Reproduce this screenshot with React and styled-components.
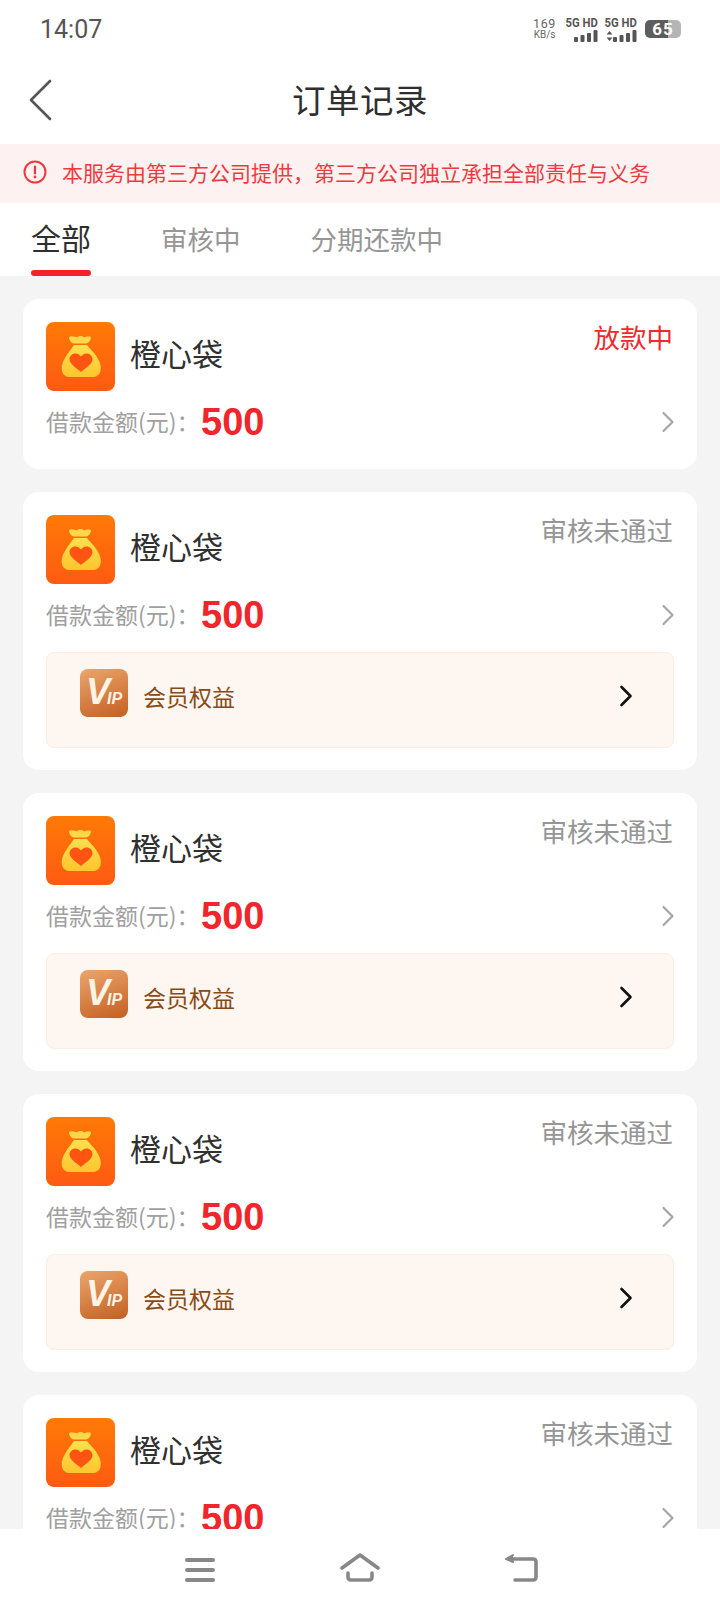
import React from 'react';
import styled, { createGlobalStyle } from 'styled-components';

const GlobalStyle = createGlobalStyle`
    html, body {
        margin: 0;
        padding: 0;
        background: #fff;
    }
    * {
        box-sizing: border-box;
    }
`;

const CJK = `"Noto Sans CJK SC", "Noto Sans", sans-serif`;

const Page = styled.div`
    width: 720px;
    height: 1612px;
    display: flex;
    flex-direction: column;
    overflow: hidden;
    background: #f4f4f4;
    font-family: ${CJK};
`;

const StatusBar = styled.div`
    height: 57px;
    flex: none;
    display: flex;
    align-items: center;
    justify-content: space-between;
    padding: 1px 39px 0 40px;
    background: #fff;
`;

const Clock = styled.span`
    font: 400 25px Roboto, sans-serif;
    color: #555;
`;

const StatusIcons = styled.div`
    display: flex;
    align-items: center;
    gap: 8px;
`;

const Speed = styled.div`
    display: flex;
    flex-direction: column;
    align-items: center;
    margin-right: 3px;
    font: 400 10px/10px Roboto, sans-serif;
    color: #666;

    b {
        font-weight: 400;
        font-size: 12.5px;
        line-height: 12px;
        letter-spacing: 0.6px;
    }
`;

const Signal = styled.div`
    display: flex;
    flex-direction: column;
    align-items: flex-end;
    gap: 1px;
    width: 31px;
    white-space: nowrap;
    font: 700 12.5px/12px Roboto, sans-serif;
    color: #555;

    span {
        display: block;
        transform: scaleX(0.9);
        transform-origin: right center;
    }
`;

const Battery = styled.div`
    width: 36px;
    height: 18px;
    border-radius: 5px;
    background: linear-gradient(90deg, #5d5d5d 0 64%, #b5b5b5 64% 100%);
    color: #fff;
    font: 700 17px/18px Roboto, sans-serif;
    text-align: center;
    letter-spacing: 1px;
`;

const Header = styled.header`
    height: 87px;
    flex: none;
    display: flex;
    align-items: center;
    justify-content: center;
    position: relative;
    padding-bottom: 4px;
    background: #fff;
`;

const BackButton = styled.svg`
    position: absolute;
    left: 28px;
    top: 22px;
`;

const Title = styled.h1`
    margin: 0;
    font-size: 33.5px;
    font-weight: 400;
    color: #2f2f2f;
    letter-spacing: 0.5px;
`;

const Notice = styled.div`
    height: 59px;
    flex: none;
    display: flex;
    align-items: center;
    gap: 15px;
    padding: 0 0 4px 23px;
    background: #fdf1f1;
    color: #ee3a3f;
    font-size: 21px;
    white-space: nowrap;
`;

const Tabs = styled.nav`
    height: 73px;
    flex: none;
    display: flex;
    align-items: flex-start;
    gap: 70px;
    padding: 0 0 0 31px;
    background: #fff;
`;

const Tab = styled.div`
    position: relative;
    height: 73px;
    padding-top: ${p => (p.$active ? '13px' : '15px')};
    font-size: ${p => (p.$active ? '30px' : '26.5px')};
    line-height: 42px;
    color: ${p => (p.$active ? '#2f2f2f' : '#969696')};

    ${p => p.$active && `
        &::after {
            content: "";
            position: absolute;
            left: 0;
            right: 0;
            bottom: 0;
            height: 6px;
            border-radius: 3px;
            background: #f5222d;
        }
    `}
`;

const OrderList = styled.main`
    flex: 1;
    min-height: 0;
    overflow: hidden;
    display: flex;
    flex-direction: column;
    gap: 23px;
    padding: 23px 23px 0;
`;

const Card = styled.section`
    flex: none;
    padding: 23px 23px 22px;
    border-radius: 16px;
    background: #fff;
`;

const CardTop = styled.div`
    display: flex;
    align-items: flex-start;
`;

const AppName = styled.span`
    margin: 11px 0 0 15px;
    flex: 1;
    font-size: 31px;
    line-height: 40px;
    color: #303030;
`;

const Status = styled.span`
    font-size: 26.5px;
    line-height: 34px;
    margin: -2px 1px 0 0;
    color: ${p => (p.$tone === 'active' ? '#ee2a2e' : '#969696')};
`;

const AmountRow = styled.div`
    display: flex;
    align-items: center;
    height: 50px;
    margin-top: 6px;
`;

const AmountLabel = styled.span`
    margin-top: -3px;
    font-size: 23px;
    color: #a0a0a0;
    width: 155px;
    white-space: nowrap;
`;

const AmountValue = styled.span`
    flex: 1;
    font: 700 38px "Liberation Sans", Arial, sans-serif;
    color: #f0262c;
`;

const RowArrow = styled.span`
    display: flex;
    margin-right: -1px;
`;

const VipRow = styled.div`
    height: 96px;
    margin-top: 12px;
    display: flex;
    align-items: center;
    padding: 0 40px 0 33px;
    border: 1px solid #faeee3;
    border-radius: 8px;
    background: #fdf6f1;
`;

const VipBadge = styled.div`
    width: 48px;
    height: 48px;
    margin-top: -15px;
    flex: none;
    display: flex;
    align-items: baseline;
    justify-content: center;
    padding-top: 3px;
    border-radius: 8px;
    background: linear-gradient(160deg, #eba66c, #c45f22);
    color: #fdf3e6;
    font: italic 700 16px/40px "Liberation Sans", Arial, sans-serif;

    b {
        font-size: 36px;
        letter-spacing: -3px;
    }
`;

const VipLabel = styled.span`
    flex: 1;
    margin: -8px 0 0 15px;
    font-size: 23px;
    color: #8a4a14;
`;

const VipArrow = styled.span`
    display: flex;
    margin-top: -9px;
`;

const BottomNav = styled.footer`
    height: 83px;
    flex: none;
    display: flex;
    align-items: flex-end;
    gap: 124px;
    padding: 0 0 29px 184px;
    background: #fff;
`;

function MoneyBag() {
    return (
        <svg width="69" height="69" viewBox="0 0 69 69">
            <defs>
                <linearGradient id="bagBg" x1="0" y1="0" x2="0" y2="1">
                    <stop offset="0" stopColor="#ff7a06" />
                    <stop offset="1" stopColor="#ff5a12" />
                </linearGradient>
                <linearGradient id="bagFill" x1="0" y1="0" x2="0" y2="1">
                    <stop offset="0" stopColor="#ffe04e" />
                    <stop offset="1" stopColor="#fdc52e" />
                </linearGradient>
            </defs>
            <rect width="69" height="69" rx="8" fill="url(#bagBg)" />
            <path d="M23 15c3-1.5 6 0 8 .5 1-2 6-2 7 0 2-.5 4-1.5 7-.5 0 3-2 6-5 6.5H28c-3-.5-5-3.5-5-6.5z" fill="#ffd84a" />
            <path d="M28 23h13c2 3 7 7 10.5 13 3 5 4 9 3 13-1 4-4 6-8 6H24c-4 0-7-2-8-6-1-4 0-8 3-13 3.5-6 7-10 9-13z" fill="url(#bagFill)" />
            <path d="M35 50c-3-3-11.5-7.5-11.5-13 0-3 2.5-5.5 6-5.5 2.5 0 4.5 1.5 5.5 3 1-1.5 3-3 5.5-3 3.5 0 6 2.5 6 5.5 0 5.5-8.5 10-11.5 13z" fill="#ff5412" />
        </svg>
    );
}

function Chevron({ color = '#a6a6a6', width = 2.2 }) {
    return (
        <svg width="14" height="22" viewBox="0 0 14 22" fill="none">
            <path d="M2.5 2l9 9-9 9" stroke={color} strokeWidth={width} strokeLinecap="round" strokeLinejoin="round" />
        </svg>
    );
}

function Bars({ arrows }) {
    return (
        <svg width={arrows ? 31 : 24} height="12" viewBox={arrows ? '0 0 31 12' : '0 0 24 12'} fill="#555">
            {arrows && <path d="M3.5 1l3 3.6h-6zM3.5 11l3-3.6h-6z" />}
            <g transform={arrows ? 'translate(7 0)' : undefined}>
                <rect x="0" y="7" width="4" height="5" rx="1" />
                <rect x="6.5" y="5" width="4" height="7" rx="1" />
                <rect x="13" y="3" width="4" height="9" rx="1" />
                <rect x="19.5" y="0" width="4" height="12" rx="1" />
            </g>
        </svg>
    );
}

function OrderCard({ status, tone, vip }) {
    return (
        <Card>
            <CardTop>
                <MoneyBag />
                <AppName>橙心袋</AppName>
                <Status $tone={tone}>{status}</Status>
            </CardTop>
            <AmountRow>
                <AmountLabel>借款金额(元)：</AmountLabel>
                <AmountValue>500</AmountValue>
                <RowArrow><Chevron /></RowArrow>
            </AmountRow>
            {vip && (
                <VipRow>
                    <VipBadge><b>V</b>IP</VipBadge>
                    <VipLabel>会员权益</VipLabel>
                    <VipArrow><Chevron color="#111" width={2.6} /></VipArrow>
                </VipRow>
            )}
        </Card>
    );
}

export default function App() {
    return (
        <Page>
            <GlobalStyle />
            <StatusBar>
                <Clock>14:07</Clock>
                <StatusIcons>
                    <Speed><b>169</b>KB/s</Speed>
                    <Signal><span>5G HD</span><Bars /></Signal>
                    <Signal><span>5G HD</span><Bars arrows /></Signal>
                    <Battery>65</Battery>
                </StatusIcons>
            </StatusBar>
            <Header>
                <BackButton width="24" height="44" viewBox="0 0 24 44" fill="none">
                    <path d="M22 2L3 21l19 19" stroke="#555" strokeWidth="2.6" strokeLinecap="round" strokeLinejoin="round" />
                </BackButton>
                <Title>订单记录</Title>
            </Header>
            <Notice>
                <svg width="24" height="24" viewBox="0 0 24 24" fill="none">
                    <circle cx="12" cy="12" r="10.5" stroke="#ee3a3f" strokeWidth="2" />
                    <path d="M12 6.5v7" stroke="#ee3a3f" strokeWidth="2.2" strokeLinecap="round" />
                    <circle cx="12" cy="17" r="1.4" fill="#ee3a3f" />
                </svg>
                <span>本服务由第三方公司提供，第三方公司独立承担全部责任与义务</span>
            </Notice>
            <Tabs>
                <Tab $active>全部</Tab>
                <Tab>审核中</Tab>
                <Tab>分期还款中</Tab>
            </Tabs>
            <OrderList>
                <OrderCard status="放款中" tone="active" />
                <OrderCard status="审核未通过" vip />
                <OrderCard status="审核未通过" vip />
                <OrderCard status="审核未通过" vip />
                <OrderCard status="审核未通过" vip />
            </OrderList>
            <BottomNav>
                <svg width="32" height="26" viewBox="0 0 32 26" fill="#888">
                    <rect x="1" y="1" width="30" height="4" rx="2" />
                    <rect x="1" y="11" width="30" height="4" rx="2" />
                    <rect x="1" y="21" width="30" height="4" rx="2" />
                </svg>
                <svg width="40" height="30" viewBox="0 0 40 30" fill="none" stroke="#888" strokeWidth="3.6" strokeLinecap="round" strokeLinejoin="round">
                    <path d="M2 15L20 2l18 13" />
                    <path d="M8 20v4c0 2 1 3 3 3h18c2 0 3-1 3-3v-4" />
                </svg>
                <svg width="34" height="30" viewBox="0 0 34 30" fill="none" stroke="#888" strokeWidth="3.6" strokeLinecap="round" strokeLinejoin="round">
                    <path d="M7 6h22c2 0 3 1 3 3v15c0 2-1 3-3 3H11" />
                    <path d="M9 2L2 6l7 3" fill="#888" strokeWidth="2" />
                </svg>
            </BottomNav>
        </Page>
    );
}
